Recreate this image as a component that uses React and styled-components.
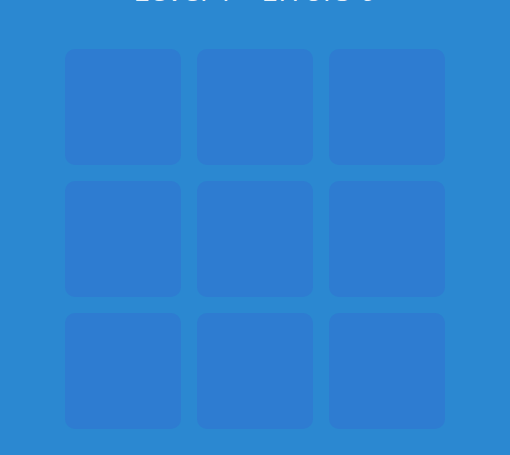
import styled, { createGlobalStyle } from "styled-components";

const GlobalStyle = createGlobalStyle`
  html, body {
    margin: 0;
    background: #2b88d1;
    overflow: hidden;
  }
`;

const Page = styled.div`
  height: 455px;
  display: flex;
  flex-direction: column;
  align-items: center;
  font-family: "Open Sans", "Liberation Sans", sans-serif;
`;

const Title = styled.h1`
  margin: -28px 0 0;
  height: 36px;
  line-height: 36px;
  font-size: 30px;
  font-weight: 400;
  color: #e8f1fa;
  letter-spacing: 0.6px;
`;

const Board = styled.div`
  margin-top: 41px;
  display: grid;
  grid-template-columns: repeat(3, 116px);
  grid-auto-rows: 116px;
  gap: 16px;
`;

const Tile = styled.div`
  border-radius: 10px;
  background: ${(p) => (p.$active ? "#ffffff" : "#2e7cd1")};
`;

const tiles = Array.from({ length: 9 }, (_, i) => i);

const App = () => {
  return (
    <>
      <GlobalStyle />
      <Page>
        <Title>Level 1 - Errors 0</Title>
        <Board>
          {tiles.map((t) => (
            <Tile key={t} />
          ))}
        </Board>
      </Page>
    </>
  );
};

export default App;
